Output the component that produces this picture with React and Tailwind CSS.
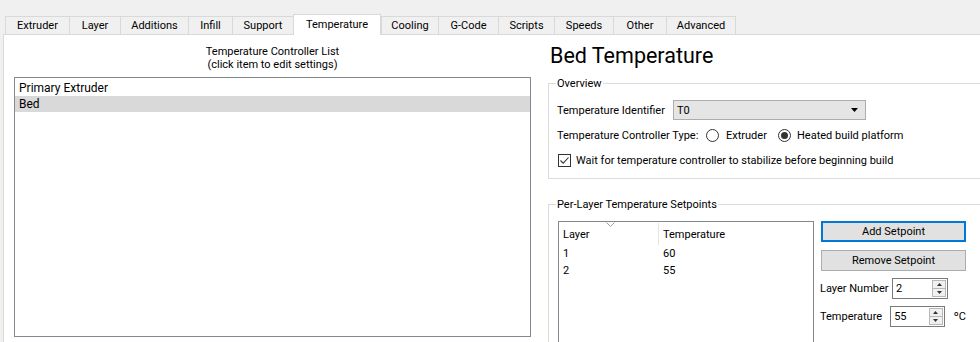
import React from "react";

const tabs = [
  { label: "Extruder", w: "w-[64px]" },
  { label: "Layer", w: "w-[51px]" },
  { label: "Additions", w: "w-[68px]" },
  { label: "Infill", w: "w-[44px]" },
  { label: "Support", w: "w-[61px]" },
  { label: "Temperature", w: "w-[88px]", active: true },
  { label: "Cooling", w: "w-[57px]" },
  { label: "G-Code", w: "w-[60px]" },
  { label: "Scripts", w: "w-[56px]" },
  { label: "Speeds", w: "w-[59px]" },
  { label: "Other", w: "w-[53px]" },
  { label: "Advanced", w: "w-[70px]", last: true },
];

function Radio({ checked }) {
  return (
    <span className="flex h-[13px] w-[13px] shrink-0 items-center justify-center rounded-full border border-[#333333] bg-white">
      {checked && <span className="h-[7px] w-[7px] rounded-full bg-[#333333]" />}
    </span>
  );
}

function Spinner({ value }) {
  return (
    <div className="flex h-[21px] w-[56px] items-stretch border border-[#7a7a7a] bg-white">
      <span className="flex-1 pl-[3px] leading-[19px]">{value}</span>
      <div className="my-[1px] mr-[1px] flex w-[14px] flex-col">
        <span className="flex h-[9px] items-center justify-center border border-[#b8b8b8] bg-[#f0f0f0]">
          <svg width="5" height="3" viewBox="0 0 5 3"><path d="M2.5 0L5 3H0z" fill="#333" /></svg>
        </span>
        <span className="flex h-[8px] items-center justify-center border border-t-0 border-[#b8b8b8] bg-[#f0f0f0]">
          <svg width="5" height="3" viewBox="0 0 5 3"><path d="M0 0h5L2.5 3z" fill="#333" /></svg>
        </span>
      </div>
    </div>
  );
}

export default function App() {
  return (
    <div className="flex h-[342px] w-[980px] flex-col overflow-hidden bg-[#f0f0f0] font-['Roboto',sans-serif] text-[11px] leading-[13px] text-black">
      {/* Tab strip */}
      <div className="flex h-[34px] shrink-0 items-end pl-[5px]">
        {tabs.map((t) =>
          t.active ? (
            <div
              key={t.label}
              className={`relative z-10 mb-[-1px] flex h-[21px] items-center justify-center border-x border-t border-[#d9d9d9] bg-white pb-[1px] ${t.w}`}
            >
              {t.label}
            </div>
          ) : (
            <div
              key={t.label}
              className={`flex h-[18px] items-center justify-center border-l border-t border-[#d9d9d9] ${t.last ? "border-r" : ""} ${t.w}`}
            >
              {t.label}
            </div>
          )
        )}
      </div>

      {/* Tab page */}
      <div className="ml-[3px] flex flex-1 border-l border-t border-[#d9d9d9] bg-white">
        {/* Controller list */}
        <div className="flex w-[544px] shrink-0 flex-col pl-[10px] pr-[17px] pt-[10px]">
          <div className="text-center">
            <div>Temperature Controller List</div>
            <div>(click item to edit settings)</div>
          </div>
          <div className="mt-[6px] h-[260px] border border-[#828790] pt-[2px] text-[12px]">
            <div className="h-[16px] px-[4px] leading-[16px]">Primary Extruder</div>
            <div className="h-[16px] bg-[#d9d9d9] px-[4px] leading-[16px]">Bed</div>
          </div>
        </div>

        {/* Settings */}
        <div className="flex flex-col">
          <h1 className="ml-[2px] mt-[7px] text-[21.5px] leading-[28px]">Bed Temperature</h1>

          <fieldset className="mt-[7px] w-[460px] border border-[#dcdcdc] px-[8px] pb-[10px]">
            <legend className="-ml-[1px] px-[1px]">Overview</legend>
            <div className="mt-[10px] flex h-[20px] items-center">
              <span className="w-[116px]">Temperature Identifier</span>
              <div className="flex h-[20px] w-[193px] items-center justify-between border border-[#adadad] bg-[#e5e5e5] pl-[3px] pr-[7px]">
                <span>T0</span>
                <svg width="7" height="4" viewBox="0 0 7 4"><path d="M0 0h7L3.5 4z" fill="#000" /></svg>
              </div>
            </div>
            <div className="mt-[7px] flex h-[16px] items-center">
              <span className="w-[149px]">Temperature Controller Type:</span>
              <Radio />
              <span className="ml-[7px] w-[52px]">Extruder</span>
              <Radio checked />
              <span className="ml-[6px]">Heated build platform</span>
            </div>
            <div className="mt-[9px] flex h-[16px] items-center">
              <span className="ml-[1px] flex h-[13px] w-[13px] items-center justify-center border border-[#333333] bg-white">
                <svg width="11" height="11" viewBox="0 0 11 11">
                  <path d="M1.5 5.5L4.2 8.2L9.5 2.5" fill="none" stroke="#333" strokeWidth="1.1" />
                </svg>
              </span>
              <span className="ml-[5px]">Wait for temperature controller to stabilize before beginning build</span>
            </div>
          </fieldset>

          <fieldset className="mt-[19px] w-[460px] border border-[#dcdcdc] pl-[9px]">
            <legend className="-ml-[2px] px-[1px]">Per-Layer Temperature Setpoints</legend>
            <div className="mt-[10px] flex gap-[7px]">
              <div className="h-[140px] w-[256px] border border-[#828790] pt-[1px]">
                <div className="relative flex h-[22px] items-center">
                  <span className="flex h-full w-[100px] items-center border-r border-[#e5e5e5] pl-[4px]">Layer</span>
                  <span className="pl-[4px]">Temperature</span>
                  <svg className="absolute left-[47px] top-[-1px]" width="9" height="5" viewBox="0 0 9 5">
                    <path d="M0.5 0.5L4.5 4.5L8.5 0.5" fill="none" stroke="#a0a0a0" strokeWidth="1" />
                  </svg>
                </div>
                <div className="flex h-[17px] items-center">
                  <span className="w-[100px] pl-[4px]">1</span>
                  <span className="pl-[4px]">60</span>
                </div>
                <div className="flex h-[17px] items-center">
                  <span className="w-[100px] pl-[4px]">2</span>
                  <span className="pl-[4px]">55</span>
                </div>
              </div>

              <div className="flex w-[145px] flex-col">
                <button className="h-[21px] border-2 border-[#0078d7] bg-[#e1e1e1] leading-[17px]">Add Setpoint</button>
                <button className="mt-[8px] h-[21px] border border-[#adadad] bg-[#e1e1e1] leading-[19px]">Remove Setpoint</button>
                <div className="-ml-[1px] mt-[7px] flex items-center">
                  <span className="w-[72px]">Layer Number</span>
                  <Spinner value="2" />
                </div>
                <div className="-ml-[1px] mt-[7px] flex items-center">
                  <span className="w-[72px]">Temperature</span>
                  <Spinner value="55" />
                  <span className="ml-[9px]">ºC</span>
                </div>
              </div>
            </div>
          </fieldset>
        </div>
      </div>
    </div>
  );
}
